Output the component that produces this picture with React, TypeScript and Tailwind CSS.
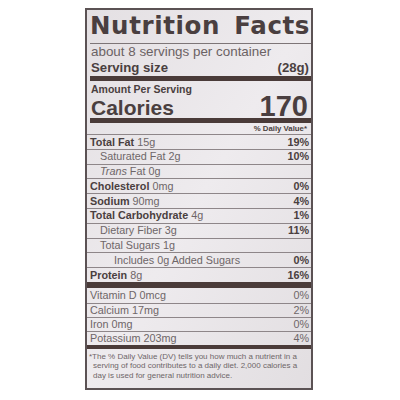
const ink = "text-[#4a3f40]";

type Row = {
  label: string;
  amount?: string;
  dv?: string;
  bold?: boolean;
  indent?: 0 | 1 | 2;
  italicPrefix?: string;
};

const rows: Row[] = [
  { label: "Total Fat", amount: "15g", dv: "19%", bold: true },
  { label: "Saturated Fat", amount: "2g", dv: "10%", indent: 1 },
  { label: "Fat", amount: "0g", indent: 1, italicPrefix: "Trans" },
  { label: "Cholesterol", amount: "0mg", dv: "0%", bold: true },
  { label: "Sodium", amount: "90mg", dv: "4%", bold: true },
  { label: "Total Carbohydrate", amount: "4g", dv: "1%", bold: true },
  { label: "Dietary Fiber", amount: "3g", dv: "11%", indent: 1 },
  { label: "Total Sugars", amount: "1g", indent: 1 },
  { label: "Includes 0g Added Sugars", dv: "0%", indent: 2 },
  { label: "Protein", amount: "8g", dv: "16%", bold: true },
];

const vitamins = [
  ["Vitamin D 0mcg", "0%"],
  ["Calcium 17mg", "2%"],
  ["Iron 0mg", "0%"],
  ["Potassium 203mg", "4%"],
];

function NutrientRow({ row }: { row: Row }) {
  const pad = row.indent === 2 ? "pl-[27px]" : row.indent === 1 ? "pl-[13px]" : "pl-[3px]";
  return (
    <div className={`flex h-[14.8px] items-center justify-between border-t border-[#8e8689] pr-[2px] text-[10.8px] leading-none ${pad}`}>
      <span>
        {row.italicPrefix && <i className="text-[#6e6668]">{row.italicPrefix} </i>}
        {row.bold ? (
          <b className={ink}>{row.label}</b>
        ) : (
          <span className="text-[#6e6668]">{row.label}</span>
        )}
        {row.amount && <span className="text-[#6e6668]"> {row.amount}</span>}
      </span>
      {row.dv && <b className={ink}>{row.dv}</b>}
    </div>
  );
}

export default function App() {
  return (
    <div className="h-[400px] w-[400px] bg-white pt-[8px] pl-[85px]" style={{ fontFamily: '"Liberation Sans", Arial, sans-serif' }}>
      <div className="flex h-[382px] w-[228px] flex-col border-2 border-[#5b5254] bg-gradient-to-br from-[#e4e0e3] via-[#eeebee] to-[#e2dee1]">
        <div
          className={`flex h-[33px] items-center justify-between pl-[3px] pr-[1px] text-[24.5px] font-bold tracking-[0.6px] ${ink}`}
          style={{ fontFamily: '"DejaVu Sans", sans-serif' }}
        >
          <span>Nutrition</span>
          <span>Facts</span>
        </div>
        <div className="ml-[3px] h-px bg-[#7d7577]" />
        <div className="flex h-[15px] items-center pl-[4px] text-[13.4px] leading-none text-[#6b6264]">
          about 8 servings per container
        </div>
        <div className={`flex h-[17px] items-center justify-between pl-[4px] pr-[2px] text-[13.2px] font-bold leading-none ${ink}`}>
          <span>Serving size</span>
          <span>(28g)</span>
        </div>
        <div className="ml-[3px] h-[5px] bg-[#4a3b39]" />
        <div className={`flex h-[13px] items-end pl-[4px] text-[10.5px] font-bold leading-none ${ink}`}>
          Amount Per Serving
        </div>
        <div className={`flex h-[24px] items-center justify-between pl-[4px] pr-[3px] font-bold leading-none ${ink}`}>
          <span className="pt-[3px] text-[21px]">Calories</span>
          <span className="text-[29px]">170</span>
        </div>
        <div className="ml-[3px] h-[5px] bg-[#4a3b39]" />
        <div className={`flex h-[11px] items-center justify-end pr-[4px] text-[7.8px] font-bold leading-none ${ink}`}>
          % Daily Value*
        </div>
        {rows.map((r) => (
          <NutrientRow key={r.label} row={r} />
        ))}
        <div className="h-[6px] bg-[#4a3b39]" />
        {vitamins.map(([name, dv], i) => (
          <div
            key={name}
            className={`flex items-center justify-between pl-[3px] pr-[2px] text-[10.8px] leading-none text-[#6e6668] ${i === 0 ? "h-[15px]" : "h-[14px] border-t border-[#8e8689]"}`}
          >
            <span>{name}</span>
            <span>{dv}</span>
          </div>
        ))}
        <div className="h-[4px] bg-[#4a3b39]" />
        <div className="pt-[3px] pl-[2px] text-[8px] leading-[9.3px] text-[#6e6668]">
          <div>*The % Daily Value (DV) tells you how much a nutrient in a</div>
          <div className="pl-[4px]">serving of food contributes to a daily diet. 2,000 calories a</div>
          <div className="pl-[4px]">day is used for general nutrition advice.</div>
        </div>
      </div>
    </div>
  );
}
